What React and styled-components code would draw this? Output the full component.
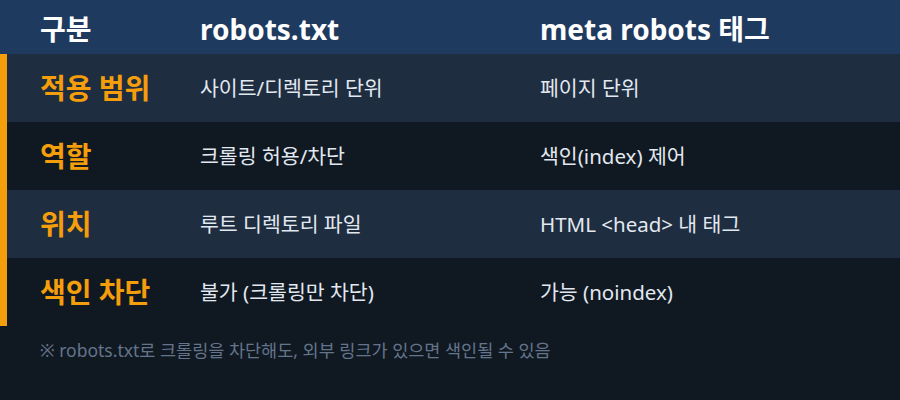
import * as React from "react";
import styled, { createGlobalStyle } from 'styled-components';

const rows = [
    { label: '적용 범위', robots: '사이트/디렉토리 단위', meta: '페이지 단위' },
    { label: '역할', robots: '크롤링 허용/차단', meta: '색인(index) 제어' },
    { label: '위치', robots: '루트 디렉토리 파일', meta: 'HTML <head> 내 태그' },
    { label: '색인 차단', robots: '불가 (크롤링만 차단)', meta: '가능 (noindex)' },
];

export default function App() {
    return (
        <>
            <GlobalStyle />
            <Page>
                <Header>
                    <HeadCell>구분</HeadCell>
                    <HeadCell>robots.txt</HeadCell>
                    <HeadCell>meta robots 태그</HeadCell>
                </Header>
                <Body>
                    {rows.map((row, i) => (
                        <Row key={row.label} $shaded={i % 2 === 0}>
                            <Label>{row.label}</Label>
                            <Value>{row.robots}</Value>
                            <Value>{row.meta}</Value>
                        </Row>
                    ))}
                </Body>
                <Note>※ robots.txt로 크롤링을 차단해도, 외부 링크가 있으면 색인될 수 있음</Note>
            </Page>
        </>
    );
};

const GlobalStyle = createGlobalStyle`
    html, body {
        margin: 0;
        padding: 0;
        background: #101922;
    }

    body {
        font-family: "Noto Sans", "Noto Sans CJK KR", sans-serif;
    }
`;

const Page = styled.main`
    width: 900px;
    height: 400px;
    background: #101922;
    overflow: hidden;
`;

const columns = `
    display: grid;
    grid-template-columns: 160px 340px 1fr;
    align-items: center;
`;

const Header = styled.div`
    ${columns};
    height: 54px;
    padding-left: 40px;
    background: #1f3a5f;
`;

const HeadCell = styled.div`
    color: #ffffff;
    font-size: 28px;
    font-weight: 700;
    line-height: 1;
    padding-top: 4px;
`;

const Body = styled.div`
    border-left: 7px solid #f59e0b;
`;

const Row = styled.div`
    ${columns};
    height: 68px;
    padding-left: 33px;
    background: ${p => p.$shaded ? '#1e2d40' : '#101922'};
`;

const Label = styled.div`
    color: #f59e0b;
    font-size: 28px;
    font-weight: 700;
    line-height: 1;
`;

const Value = styled.div`
    color: #e2e8f0;
    font-size: 20.5px;
    line-height: 1;
`;

const Note = styled.p`
    margin: 0;
    padding: 14px 0 0 40px;
    color: #64748b;
    font-size: 17.5px;
    line-height: 20px;
`;
